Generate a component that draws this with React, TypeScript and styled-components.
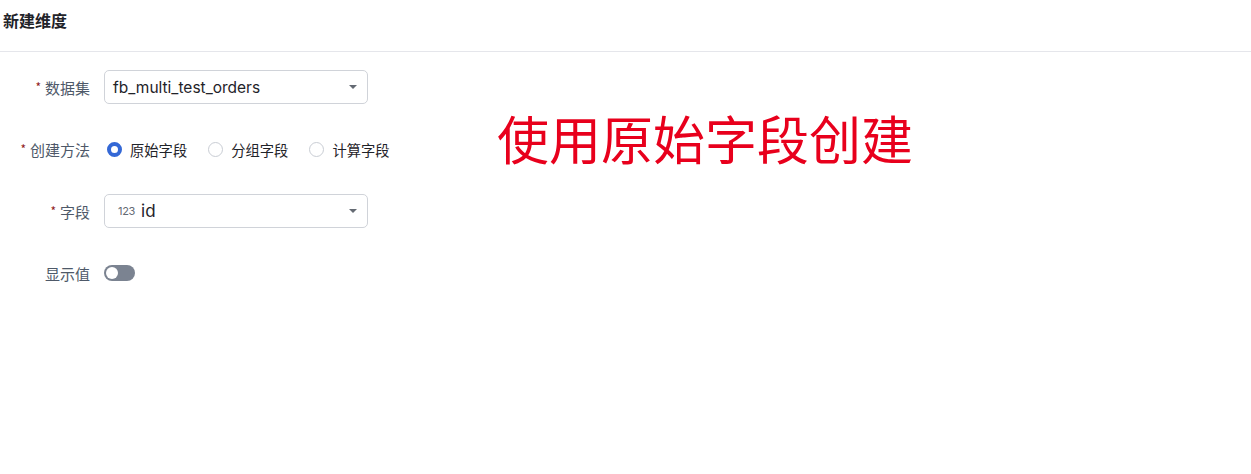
import React, { useState } from 'react'
import styled, { createGlobalStyle } from 'styled-components'

const GlobalStyle = createGlobalStyle`
  body {
    margin: 0;
    background: #fff;
    font-family: Inter, "Noto Sans CJK SC", sans-serif;
  }
`

const Page = styled.div`
  width: 1251px;
  min-height: 474px;
  background: #fff;
`

const Header = styled.div`
  height: 52px;
  box-sizing: border-box;
  padding: 8px 0 0 3px;
  border-bottom: 1px solid #e5e6eb;
`

const Title = styled.h1`
  margin: 0;
  font-size: 16px;
  line-height: 24px;
  font-weight: 600;
  color: #1f2329;
  font-family: "Noto Sans CJK SC", sans-serif;
`

const Body = styled.div`
  display: flex;
  align-items: flex-start;
`

const Form = styled.div`
  width: 400px;
  padding-top: 18px;
  display: flex;
  flex-direction: column;
  gap: 28px;
`

const Row = styled.div`
  display: flex;
  align-items: center;
  height: 34px;
`

const Label = styled.div`
  width: 90px;
  margin-right: 14px;
  text-align: right;
  font-size: 15px;
  color: #4e5969;
  font-family: "Noto Sans CJK SC", sans-serif;
  white-space: nowrap;
`

const Star = styled.span`
  color: #8f1d1d;
  font-size: 12px;
  margin-right: 4px;
  vertical-align: 2px;
`

const Select = styled.div`
  width: 264px;
  height: 34px;
  box-sizing: border-box;
  border: 1px solid #d0d3d9;
  border-radius: 5px;
  display: flex;
  align-items: center;
  padding: 0 10px 0 8px;
  color: #1f2329;
`

const SelectValue = styled.span<{ $size?: number }>`
  flex: 1;
  font-size: ${p => p.$size ?? 15.5}px;
  font-family: Inter, sans-serif;
`

const TypeTag = styled.span`
  font-size: 11px;
  color: #646a73;
  margin: 0 6px 0 5px;
  font-family: Inter, sans-serif;
  letter-spacing: -0.3px;
`

const Caret = styled.span`
  width: 0;
  height: 0;
  border-left: 4px solid transparent;
  border-right: 4px solid transparent;
  border-top: 4px solid #646a73;
`

const RadioGroup = styled.div`
  display: flex;
  align-items: center;
  gap: 21px;
  margin-left: 3px;
`

const RadioItem = styled.label`
  display: flex;
  align-items: center;
  gap: 8px;
  font-size: 14.3px;
  color: #1f2329;
  font-family: "Noto Sans CJK SC", sans-serif;
  cursor: pointer;
`

const RadioDot = styled.span<{ $checked: boolean }>`
  width: 15px;
  height: 15px;
  box-sizing: border-box;
  border-radius: 50%;
  border: ${p => (p.$checked ? '4.5px solid #3468d6' : '1.5px solid #c9cdd4')};
  background: #fff;
`

const Switch = styled.span<{ $on: boolean }>`
  width: 31px;
  height: 16px;
  border-radius: 8px;
  background: ${p => (p.$on ? '#3468d6' : '#7b8391')};
  position: relative;
  cursor: pointer;
  &::after {
    content: '';
    position: absolute;
    top: 2px;
    left: ${p => (p.$on ? '17px' : '2px')};
    width: 12px;
    height: 12px;
    border-radius: 50%;
    background: #fff;
  }
`

const Note = styled.div`
  margin-left: 97px;
  margin-top: 48px;
  font-size: 52px;
  line-height: 76px;
  color: #e8001c;
  font-family: "Noto Sans CJK SC", sans-serif;
  white-space: nowrap;
`

const methods = ['原始字段', '分组字段', '计算字段']

const App: React.FC = () => {
  const [method, setMethod] = useState('原始字段')
  const [show, setShow] = useState(false)

  return (
    <Page>
      <GlobalStyle />
      <Header>
        <Title>新建维度</Title>
      </Header>
      <Body>
        <Form>
          <Row>
            <Label><Star>*</Star>数据集</Label>
            <Select>
              <SelectValue>fb_multi_test_orders</SelectValue>
              <Caret />
            </Select>
          </Row>
          <Row>
            <Label><Star>*</Star>创建方法</Label>
            <RadioGroup>
              {methods.map(m => (
                <RadioItem key={m} onClick={() => setMethod(m)}>
                  <RadioDot $checked={method === m} />
                  {m}
                </RadioItem>
              ))}
            </RadioGroup>
          </Row>
          <Row>
            <Label><Star>*</Star>字段</Label>
            <Select>
              <TypeTag>123</TypeTag>
              <SelectValue $size={17}>id</SelectValue>
              <Caret />
            </Select>
          </Row>
          <Row>
            <Label>显示值</Label>
            <Switch $on={show} onClick={() => setShow(!show)} />
          </Row>
        </Form>
        <Note>使用原始字段创建</Note>
      </Body>
    </Page>
  )
}

export default App
